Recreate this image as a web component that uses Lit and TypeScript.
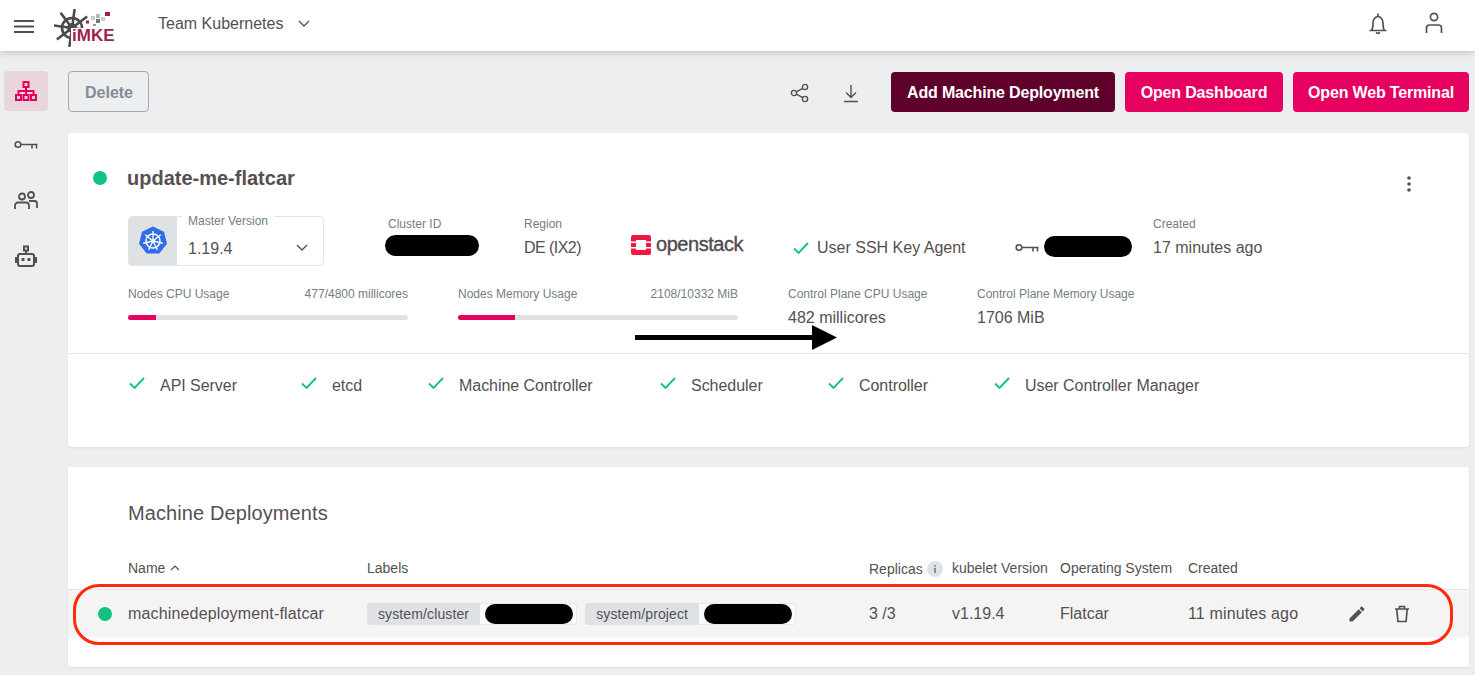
import { LitElement, html, css, svg } from "lit";
import { customElement } from "lit/decorators.js";

const check = html`<svg class="check" viewBox="0 0 16 12" width="16" height="12"><path d="M1 6.5l4.6 4.4L15 1" fill="none" stroke="#10c383" stroke-width="1.9"/></svg>`;
const chevron = html`<svg class="chev" viewBox="0 0 12 7" width="12" height="7"><path d="M1 1l5 5 5-5" fill="none" stroke="#564f52" stroke-width="1.4"/></svg>`;
const keyIcon = html`<svg viewBox="0 0 24 10" width="24" height="10"><circle cx="4" cy="4.5" r="2.8" fill="none" stroke="#564f52" stroke-width="1.6"/><path d="M7 4.5h16.500M18 4.500V8.500M22.500 4.500V8.500" fill="none" stroke="#564f52" stroke-width="1.6"/></svg>`;
const spokes = [0, 45, 90, 135];

@customElement("app-root")
export class AppRoot extends LitElement {
  static styles = css`
    :host { display: block; position: relative; width: 1475px; height: 675px; overflow: hidden; background: #eceef0; font-family: "Liberation Sans", Arial, sans-serif; color: #564f52; font-size: 16px; }
    svg { display: block; flex: none; }
    .header { position: relative; z-index: 2; height: 51px; background: #fff; box-shadow: 0 1px 7px rgba(0,0,0,.22); display: flex; align-items: center; padding: 0 29px 0 14px; box-sizing: border-box; }
    .logo { margin: 0 0 0 20px; }
    .team { margin-left: 42px; line-height: 24px; margin-top: -3px; }
    .team-chev { margin: -4px 0 0 15px; }
    .header-icons { margin-left: auto; display: flex; gap: 32px; margin-top: -5px; }
    .body { display: flex; }
    .side { width: 68px; flex: none; padding: 20px 0 0 4px; box-sizing: border-box; display: flex; flex-direction: column; }
    .side-active { width: 44px; height: 40px; border-radius: 4px; background: #e8d6da; display: flex; align-items: center; justify-content: center; }
    .side-item { width: 44px; display: flex; justify-content: center; }
    .side-key { margin-top: 29px; }
    .side-people { margin-top: 41px; }
    .side-robot { margin-top: 34px; }
    .main { flex: 1; padding: 20px 6px 0 0; min-width: 0; }
    .toolbar { display: flex; align-items: center; height: 41px; margin-bottom: 21px; }
    .delete { width: 81px; height: 41px; box-sizing: border-box; border: 1px solid #a3abb1; border-radius: 4px; color: #858d94; font-weight: bold; display: flex; align-items: center; justify-content: center; padding: 2px 0 0 1px; }
    .tool-icons { margin-left: auto; display: flex; gap: 31px; align-items: center; margin: 2px 30px 0 auto; }
    .btn { height: 40px; margin-top: 1px; padding-top: 1px; border-radius: 4px; color: #fff; font-weight: bold; display: flex; align-items: center; justify-content: center; box-sizing: border-box; letter-spacing: -0.17px; }
    .btn-add { width: 224px; background: #5f002b; margin-right: 10px; }
    .btn-dash { width: 158px; background: #e6005f; margin-right: 10px; }
    .btn-term { width: 176px; background: #e6005f; }
    .card { background: #fff; border-radius: 3px; box-shadow: 0 1px 2px rgba(0,0,0,.08); }
    .cluster { height: 314px; margin-bottom: 20px; }
    .title-row { display: flex; align-items: center; height: 28px; padding: 31px 58px 0 25px; }
    .dot { width: 14px; height: 14px; border-radius: 50%; background: #10c383; flex: none; }
    .title { margin-left: 20px; font-size: 20px; font-weight: bold; line-height: 28px; }
    .kebab { margin-left: auto; margin-top: 12px; }
    .info { display: grid; grid-template-columns: 260px 136px 107px 162px 222px 138px 1fr; height: 50px; margin-top: 24px; padding-left: 60px; }
    .field { position: relative; width: 196px; height: 50px; box-sizing: border-box; border: 1px solid #e2e4e6; border-radius: 4px; display: flex; }
    .field-icon { width: 48px; background: #dfe2e5; border-radius: 3px 0 0 3px; display: flex; align-items: center; justify-content: center; flex: none; }
    .field-label { position: absolute; left: 53px; top: -4px; background: #fff; padding: 0 6px; font-size: 12px; line-height: 16px; color: #757d85; }
    .field-val { margin: 20px 0 0 11px; line-height: 24px; }
    .field-chev { position: absolute; right: 15px; top: 27px; }
    .lbl { font-size: 12px; line-height: 16px; color: #757d85; white-space: nowrap; }
    .val { line-height: 24px; margin-top: 4px; white-space: nowrap; }
    .region { letter-spacing: -0.55px; }
    .pill { background: #000; border-radius: 11px; height: 21px; }
    .pill-id { width: 94px; margin: 3px 0 0 -3px; }
    .os { display: flex; align-items: center; gap: 5px; padding-top: 19px; height: 20px; }
    .os-name { font-size: 20px; color: #4f4a4c; letter-spacing: -0.45px; line-height: 20px; margin-top: -3px; -webkit-text-stroke: 0.35px #4f4a4c; }
    .inline { display: flex; align-items: center; height: 24px; margin-top: 20px; }
    .ssh { gap: 8px; }
    .key { gap: 5px; }
    .pill-key { width: 88px; margin-top: -4px; }
    .usage { display: grid; grid-template-columns: 280px 280px 139px 1fr; column-gap: 50px; margin-top: 20px; padding-left: 60px; height: 43px; padding-bottom: 24px; border-bottom: 1px solid #e3e4e6; }
    .lbl-row { display: flex; justify-content: space-between; }
    .bar { height: 5px; border-radius: 3px; background: #dfe2e5; margin-top: 13px; overflow: hidden; }
    .bar-fill { height: 100%; background: #e6005f; }
    .health { display: grid; grid-template-columns: 172px 127px 232px 168px 166px 1fr; padding: 20px 0 0 61px; }
    .h-item { display: flex; align-items: center; gap: 15px; line-height: 24px; letter-spacing: -0.04px; }
    .h-item .check { margin-top: -6px; }
    .deploy { height: 200px; }
    .deploy h2 { margin: 0; padding: 32px 0 0 60px; font-size: 20px; font-weight: normal; line-height: 28px; letter-spacing: 0.1px; }
    .cols { display: grid; grid-template-columns: 239px 502px 83px 108px 128px 1fr; padding-left: 60px; }
    .thead { margin-top: 29px; height: 33px; font-size: 14px; line-height: 24px; }
    .th-flex { display: flex; align-items: center; height: 24px; gap: 5px; }
    .reps { margin-top: 1px; gap: 4px; }
    .trow { height: 47px; background: #f4f4f4; border-top: 1px solid #e4e4e4; align-items: center; position: relative; }
    .trow-dot { position: absolute; left: 30px; top: 17px; }
    .md-name { letter-spacing: 0.16px; white-space: nowrap; }
    .labels { display: flex; gap: 8px; }
    .chip { display: flex; height: 22px; border: 1px solid #e6e8ea; border-left: 0; border-radius: 3px; background: #fafafa; box-sizing: border-box; align-items: center; }
    .chip-key { height: 22px; padding: 0 11px; background: #dfe2e5; border-radius: 3px 0 0 3px; font-size: 14px; line-height: 22px; letter-spacing: 0.12px; }
    .chip-pill { width: 88px; height: 20px; border-radius: 10px; background: #000; margin: 0 3px 0 5px; }
    .last { display: flex; align-items: center; }
    .created { width: 159px; flex: none; white-space: nowrap; letter-spacing: 0.14px; }
    .actions { display: flex; align-items: center; gap: 25px; }
    .ring { position: absolute; left: 73px; top: 584px; width: 1380px; height: 61px; box-sizing: border-box; border: 3px solid #ff2a0a; border-radius: 26px; z-index: 3; pointer-events: none; }
    .arrow { position: absolute; left: 635px; top: 325px; z-index: 3; }
  `;

  private wheel() {
    return svg`
      <g fill="none" stroke="#4d4a4b">
        <circle cx="32" cy="23" r="10" stroke-width="2.6"/>
        <circle cx="32" cy="23" r="4" stroke-width="2"/>
        ${spokes.map(a => svg`<path d="M32 4V42" stroke-width="2.600" transform="rotate(${a + 8} 32 23)"/>`)}
      </g>`;
  }

  render() {
    return html`
      <div class="header">
        <svg viewBox="0 0 20 14" width="20" height="14" class="burger"><path d="M0 2h20M0 7.500h20M0 13h20" stroke="#564f52" stroke-width="1.800"/></svg>
        <svg class="logo" viewBox="14 0 62 42" width="62" height="42">
          ${this.wheel()}
          <rect x="31" y="23" width="45" height="16" fill="#fff"/>
          <text x="32" y="36" font-size="17" font-weight="bold" fill="#a21f50" font-family="Liberation Sans, sans-serif">iMKE</text>
          <rect x="46" y="15.500" width="3" height="3" fill="#a21f50"/>
          <rect x="51" y="11" width="4" height="4" fill="#c9cdd0"/><rect x="56" y="9" width="4" height="4" fill="#b5babd"/>
          <rect x="56" y="14" width="4" height="4" fill="#74787b"/><rect x="61" y="12" width="4" height="4" fill="#c9cdd0"/>
          <rect x="65" y="7" width="5" height="4" fill="#a21f50"/><rect x="53" y="19" width="3" height="2" fill="#d07a9a"/>
        </svg>
        <span class="team">Team Kubernetes</span>
        <span class="team-chev">${chevron}</span>
        <div class="header-icons">
          <svg viewBox="0 0 24 24" width="24" height="24"><path d="M3.500 19.500h17M5.500 19.500c1.500-2 1.500-4 1.500-7.500 0-3.500 2.200-6.500 5-6.500s5 3 5 6.500 0 5.500 1.500 7.500M12 2.500v3M10.500 21a1.500 1.500 0 003 0" fill="none" stroke="#564f52" stroke-width="1.700"/></svg>
          <svg viewBox="0 0 24 24" width="24" height="24"><circle cx="12" cy="6" r="3.600" fill="none" stroke="#564f52" stroke-width="1.700"/><path d="M4.500 22v-5a3 3 0 013-3h9a3 3 0 013 3v5" fill="none" stroke="#564f52" stroke-width="1.700"/></svg>
        </div>
      </div>
      <div class="body">
        <nav class="side">
          <div class="side-active">
            <svg viewBox="0 0 22 20" width="22" height="20"><g fill="none" stroke="#e6005f" stroke-width="2"><rect x="8.500" y="1" width="5" height="5"/><rect x="1" y="14" width="5" height="5"/><rect x="8.500" y="14" width="5" height="5"/><rect x="16" y="14" width="5" height="5"/><path d="M11 6v8M3.500 14v-4h15v4"/></g></svg>
          </div>
          <div class="side-item side-key">${keyIcon}</div>
          <div class="side-item side-people">
            <svg viewBox="0 0 24 20" width="24" height="20"><g fill="none" stroke="#564f52" stroke-width="1.800"><circle cx="8" cy="5.500" r="3"/><circle cx="17" cy="4" r="3"/><path d="M1 18v-3.500a3 3 0 013-3h8a3 3 0 013 3V18M15 10h5.500a2.500 2.500 0 012.500 2.500V17"/></g></svg>
          </div>
          <div class="side-item side-robot">
            <svg viewBox="0 0 24 24" width="24" height="24"><g fill="none" stroke="#564f52" stroke-width="2"><rect x="10" y="1.500" width="4" height="4"/><path d="M12 5.500V9"/><rect x="4" y="9" width="16" height="12" rx="2"/></g><rect x="1" y="12" width="2.500" height="6" fill="#564f52"/><rect x="20.500" y="12" width="2.500" height="6" fill="#564f52"/><rect x="7.500" y="13" width="3" height="3" fill="#564f52"/><rect x="13.500" y="13" width="3" height="3" fill="#564f52"/></svg>
          </div>
        </nav>
        <main class="main">
          <div class="toolbar">
            <div class="delete">Delete</div>
            <div class="tool-icons">
              <svg viewBox="0 0 20 20" width="20" height="20"><g fill="none" stroke="#564f52" stroke-width="1.400"><circle cx="4" cy="10" r="2.600"/><circle cx="15" cy="4" r="2.600"/><circle cx="15" cy="16" r="2.600"/><path d="M6.300 8.800l6.400-3.500M6.300 11.200l6.400 3.500"/></g></svg>
              <svg viewBox="0 0 20 20" width="20" height="20"><path d="M10 2v12M5 9.500l5 5 5-5M3 18.500h14" fill="none" stroke="#564f52" stroke-width="1.400"/></svg>
            </div>
            <div class="btn btn-add">Add Machine Deployment</div>
            <div class="btn btn-dash">Open Dashboard</div>
            <div class="btn btn-term">Open Web Terminal</div>
          </div>

          <section class="card cluster">
            <div class="title-row">
              <span class="dot"></span>
              <span class="title">update-me-flatcar</span>
              <svg class="kebab" viewBox="0 0 4 16" width="4" height="16"><circle cx="2" cy="2" r="1.800" fill="#564f52"/><circle cx="2" cy="8" r="1.800" fill="#564f52"/><circle cx="2" cy="14" r="1.800" fill="#564f52"/></svg>
            </div>
            <div class="info">
              <div class="field">
                <div class="field-icon">
                  <svg viewBox="0 0 30 30" width="30" height="30">
                    <path d="M15 0.500l11 5.300 3 12-7.700 9.700H8.700L1 17.800l3-12z" fill="#326ce5"/>
                    <g fill="none" stroke="#fff"><circle cx="15" cy="15" r="7" stroke-width="1.500"/>
                    ${[0, 51, 103, 154, 206, 257, 309].map(a => svg`<path d="M15 15V5" stroke-width="1.300" transform="rotate(${a} 15 15)"/>`)}</g>
                    <circle cx="15" cy="15" r="1.800" fill="#fff"/>
                  </svg>
                </div>
                <span class="field-label">Master Version</span>
                <span class="field-val">1.19.4</span>
                <span class="field-chev">${chevron}</span>
              </div>
              <div><div class="lbl">Cluster ID</div><div class="pill pill-id"></div></div>
              <div><div class="lbl">Region</div><div class="val region">DE (IX2)</div></div>
              <div class="os">
                <svg viewBox="0 0 20 20" width="20" height="20"><rect width="20" height="20" rx="2" fill="#ed1944"/><rect x="5" y="5" width="10" height="10" fill="#fff"/><rect x="0" y="6.500" width="5" height="1.500" fill="#fff"/><rect x="0" y="12" width="5" height="1.500" fill="#fff"/><rect x="15" y="6.500" width="5" height="1.500" fill="#fff"/><rect x="15" y="12" width="5" height="1.500" fill="#fff"/></svg>
                <span class="os-name">openstack</span>
              </div>
              <div class="inline ssh">${check}<span>User SSH Key Agent</span></div>
              <div class="inline key">${keyIcon}<div class="pill pill-key"></div></div>
              <div><div class="lbl">Created</div><div class="val">17 minutes ago</div></div>
            </div>
            <div class="usage">
              <div>
                <div class="lbl lbl-row"><span>Nodes CPU Usage</span><span>477/4800 millicores</span></div>
                <div class="bar"><div class="bar-fill" style="width:${(477 / 4800) * 100}%"></div></div>
              </div>
              <div>
                <div class="lbl lbl-row"><span>Nodes Memory Usage</span><span>2108/10332 MiB</span></div>
                <div class="bar"><div class="bar-fill" style="width:${(2108 / 10332) * 100}%"></div></div>
              </div>
              <div><div class="lbl">Control Plane CPU Usage</div><div class="val">482 millicores</div></div>
              <div><div class="lbl">Control Plane Memory Usage</div><div class="val">1706 MiB</div></div>
            </div>
            <div class="health">
              ${["API Server", "etcd", "Machine Controller", "Scheduler", "Controller", "User Controller Manager"].map(
                t => html`<div class="h-item">${check}<span>${t}</span></div>`
              )}
            </div>
          </section>

          <section class="card deploy">
            <h2>Machine Deployments</h2>
            <div class="cols thead">
              <div class="th-flex">Name <svg viewBox="0 0 10 6" width="10" height="6"><path d="M1 5l4-4 4 4" fill="none" stroke="#564f52" stroke-width="1.200"/></svg></div>
              <div>Labels</div>
              <div class="th-flex reps">Replicas <svg viewBox="0 0 16 16" width="16" height="16"><circle cx="8" cy="8" r="8" fill="#dfe2e5"/><rect x="7.200" y="7" width="1.600" height="5" fill="#6f767c"/><rect x="7.200" y="4" width="1.600" height="1.600" fill="#6f767c"/></svg></div>
              <div>kubelet Version</div>
              <div>Operating System</div>
              <div>Created</div>
            </div>
            <div class="cols trow">
              <span class="dot trow-dot"></span>
              <div class="md-name">machinedeployment-flatcar</div>
              <div class="labels">
                <div class="chip"><span class="chip-key">system/cluster</span><span class="chip-pill"></span></div>
                <div class="chip"><span class="chip-key">system/project</span><span class="chip-pill"></span></div>
              </div>
              <div>3 /3</div>
              <div>v1.19.4</div>
              <div>Flatcar</div>
              <div class="last">
                <span class="created">11 minutes ago</span>
                <div class="actions">
                  <svg viewBox="0 0 24 24" width="20" height="20"><path d="M3 17.250V21h3.750L17.810 9.940l-3.750-3.750L3 17.250zM20.710 7.040a1 1 0 000-1.410l-2.340-2.340a1 1 0 00-1.410 0l-1.830 1.830 3.750 3.750 1.830-1.830z" fill="#564f52"/></svg>
                  <svg viewBox="0 0 20 20" width="20" height="20"><path d="M3 5h14M7.500 5V2.500h5V5M4.800 5l1.100 12.500h8.200L15.200 5" fill="none" stroke="#564f52" stroke-width="1.700"/></svg>
                </div>
              </div>
            </div>
          </section>
        </main>
      </div>
      <div class="ring"></div>
      <svg class="arrow" viewBox="0 0 202 25" width="202" height="25"><path d="M0 10h177v-10l25 12.500-25 12.500v-10H0z" fill="#000"/></svg>
    `;
  }
}
